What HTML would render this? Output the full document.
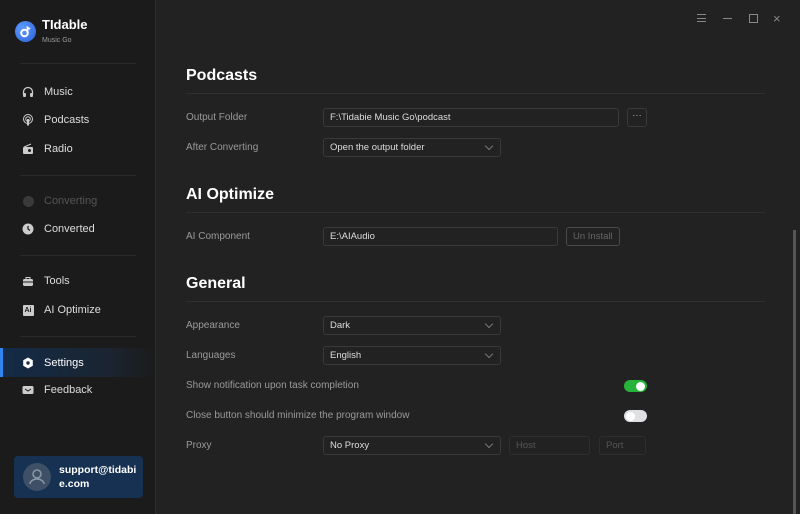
<!DOCTYPE html>
<html><head><meta charset="utf-8"><style>
*{box-sizing:border-box;margin:0;padding:0}
body{width:800px;height:514px;overflow:hidden;background:#222;font-family:"Liberation Sans",sans-serif;position:relative;color:#ccc}
.side{position:absolute;left:0;top:0;width:156px;height:514px;background:#1b1b1b;border-right:1px solid #2c2c2c}
.main{position:absolute;left:157px;top:0;right:0;bottom:0;background:#222}
.abs{position:absolute}
.nav{position:absolute;left:0;width:155px;height:28px;display:flex;align-items:center;font-size:11px;color:#ddd}
.nav .ic{width:12px;height:12px;margin-left:22px;margin-right:10px;display:flex;align-items:center;justify-content:center}
.sep{position:absolute;left:20px;width:116px;height:1px;background:#2a2a2a}
.h{position:absolute;left:186px;font-size:16px;font-weight:bold;color:#fff}
.hl{position:absolute;left:186px;width:579px;height:1px;background:#2f2f2f}
.lab{position:absolute;left:186px;font-size:10px;color:#9a9a9a}
.box{position:absolute;height:19px;border:1px solid #3a3a3a;border-radius:3px;font-size:9.5px;color:#ddd;padding-left:6px;line-height:17px}
.chev{position:absolute;right:8px;top:4px;width:6px;height:6px;border-right:1px solid #777;border-bottom:1px solid #777;transform:rotate(45deg)}
</style></head><body>
<div class="side">
  <div class="abs" style="left:15px;top:21px;width:21px;height:21px;border-radius:50%;background:radial-gradient(circle at 35% 35%,#5f9bff,#2a5fd6)">
    <svg width="21" height="21" viewBox="0 0 21 21"><circle cx="9.5" cy="12" r="3.3" fill="none" stroke="#fff" stroke-width="2"/><path d="M12.5 12V6.5L15 8" stroke="#fff" stroke-width="1.8" fill="none"/></svg>
  </div>
  <div class="abs" style="left:42px;top:17px;font-size:13px;font-weight:bold;color:#fff">TIdable</div>
  <div class="abs" style="left:42px;top:37px;font-size:7px;color:#999">Music Go</div>
  <div class="sep" style="top:63px"></div>
  <div class="nav" style="top:78px"><div class="ic"><svg width="12" height="12"><path d="M1.5 8V6a4.5 4.5 0 0 1 9 0v2" stroke="#ccc" stroke-width="1.3" fill="none"/><rect x="1" y="7" width="3" height="4" rx="1" fill="#ccc"/><rect x="8" y="7" width="3" height="4" rx="1" fill="#ccc"/></svg></div>Music</div>
  <div class="nav" style="top:106px"><div class="ic"><svg width="12" height="12"><circle cx="6" cy="5" r="4.5" stroke="#ccc" fill="none"/><circle cx="6" cy="5" r="2.3" stroke="#ccc" fill="none"/><rect x="5" y="5" width="2" height="6.5" fill="#ccc"/></svg></div>Podcasts</div>
  <div class="nav" style="top:135px"><div class="ic"><svg width="12" height="12"><rect x="1" y="4" width="10" height="7" rx="1" fill="#ccc"/><path d="M2 4L9 1" stroke="#ccc"/><circle cx="7.5" cy="7.5" r="1.5" fill="#1b1b1b"/></svg></div>Radio</div>
  <div class="sep" style="top:175px"></div>
  <div class="nav" style="top:187px;color:#555"><div class="ic"><div style="width:11px;height:11px;border-radius:50%;background:#3a3a3a"></div></div>Converting</div>
  <div class="nav" style="top:215px"><div class="ic"><svg width="12" height="12"><circle cx="6" cy="6" r="5.5" fill="#ccc"/><path d="M6 3v3l2 1.5" stroke="#1b1b1b" stroke-width="1.2" fill="none"/></svg></div>Converted</div>
  <div class="sep" style="top:255px"></div>
  <div class="nav" style="top:267px"><div class="ic"><svg width="12" height="12"><rect x="1" y="4" width="10" height="7" rx="1.5" fill="#ccc"/><path d="M4 4V2.5h4V4" stroke="#ccc" fill="none"/><path d="M1 7h10" stroke="#1b1b1b"/></svg></div>Tools</div>
  <div class="nav" style="top:296px"><div class="ic"><div style="width:11px;height:11px;background:#ccc;border-radius:1px;font-size:7px;color:#1b1b1b;font-weight:bold;line-height:11px;text-align:center">Ai</div></div>AI Optimize</div>
  <div class="sep" style="top:336px"></div>
  <div class="nav" style="top:348px;height:29px;background:linear-gradient(90deg,#132b47,#1b2430 70%,#1b1b1b);color:#fff;border-left:3px solid #2f86f0"><div class="ic" style="margin-left:19px"><svg width="12" height="12"><path d="M6 0.5L10.8 3.2V8.8L6 11.5L1.2 8.8V3.2Z" fill="#fff"/><circle cx="6" cy="6" r="1.7" fill="#1a2c44"/></svg></div>Settings</div>
  <div class="nav" style="top:376px"><div class="ic"><svg width="12" height="12"><rect x="0.5" y="2" width="11" height="8" rx="1.5" fill="#ccc"/><path d="M3 5l3 2 3-2" stroke="#1b1b1b" fill="none"/></svg></div>Feedback</div>
  <div class="abs" style="left:14px;top:456px;width:129px;height:42px;background:#173152;border-radius:4px">
    <div class="abs" style="left:9px;top:7px;width:28px;height:28px;border-radius:50%;background:#3d5065"><svg width="28" height="28"><circle cx="14" cy="11" r="4" stroke="#8a98a8" stroke-width="1.5" fill="none"/><path d="M7 21a7 5 0 0 1 14 0" stroke="#8a98a8" stroke-width="1.5" fill="none"/></svg></div>
    <div class="abs" style="left:45px;top:7px;font-size:10.5px;color:#fff;line-height:14px;font-weight:bold">support@tidabi<br>e.com</div>
  </div>
</div>
<div class="main"></div>
<div class="abs" style="left:697px;top:14px;width:9px;height:8px;border-top:1px solid #888;border-bottom:1px solid #888"><div style="margin-top:2.5px;height:1px;background:#888"></div></div>
<div class="abs" style="left:723px;top:18px;width:9px;height:1px;background:#888"></div>
<div class="abs" style="left:749px;top:14px;width:9px;height:9px;border:1px solid #888"></div>
<div class="abs" style="left:773px;top:11px;font-size:13px;color:#888">×</div>
<div class="abs" style="left:793px;top:230px;width:3px;height:284px;background:#555"></div>

<div class="h" style="top:67px">Podcasts</div>
<div class="hl" style="top:93px"></div>
<div class="lab" style="top:112px">Output Folder</div>
<div class="box" style="left:323px;top:108px;width:296px">F:\Tidabie Music Go\podcast</div>
<div class="box" style="left:627px;top:108px;width:20px;padding:0;text-align:center;color:#aaa;line-height:13px">···</div>
<div class="lab" style="top:142px">After Converting</div>
<div class="box" style="left:323px;top:138px;width:178px">Open the output folder<div class="chev"></div></div>

<div class="h" style="top:186px">AI Optimize</div>
<div class="hl" style="top:212px"></div>
<div class="lab" style="top:231px">AI Component</div>
<div class="box" style="left:323px;top:227px;width:235px">E:\AIAudio</div>
<div class="box" style="left:566px;top:227px;width:54px;color:#666;border-color:#4a4a4a">Un Install</div>

<div class="h" style="top:275px">General</div>
<div class="hl" style="top:301px"></div>
<div class="lab" style="top:320px">Appearance</div>
<div class="box" style="left:323px;top:316px;width:178px">Dark<div class="chev"></div></div>
<div class="lab" style="top:350px">Languages</div>
<div class="box" style="left:323px;top:346px;width:178px">English<div class="chev"></div></div>
<div class="lab" style="top:380px">Show notification upon task completion</div>
<div class="abs" style="left:624px;top:380px;width:23px;height:12px;border-radius:6px;background:#27b33a"><div class="abs" style="right:2px;top:1.5px;width:9px;height:9px;border-radius:50%;background:#fff"></div></div>
<div class="lab" style="top:410px">Close button should minimize the program window</div>
<div class="abs" style="left:624px;top:410px;width:23px;height:12px;border-radius:6px;background:#dfe0e4"><div class="abs" style="left:2px;top:1.5px;width:9px;height:9px;border-radius:50%;background:#fff"></div></div>
<div class="lab" style="top:440px">Proxy</div>
<div class="box" style="left:323px;top:436px;width:178px">No Proxy<div class="chev"></div></div>
<div class="box" style="left:509px;top:436px;width:81px;color:#555;border-color:#2e2e2e">Host</div>
<div class="box" style="left:599px;top:436px;width:47px;color:#555;border-color:#2e2e2e">Port</div>
</body></html>
